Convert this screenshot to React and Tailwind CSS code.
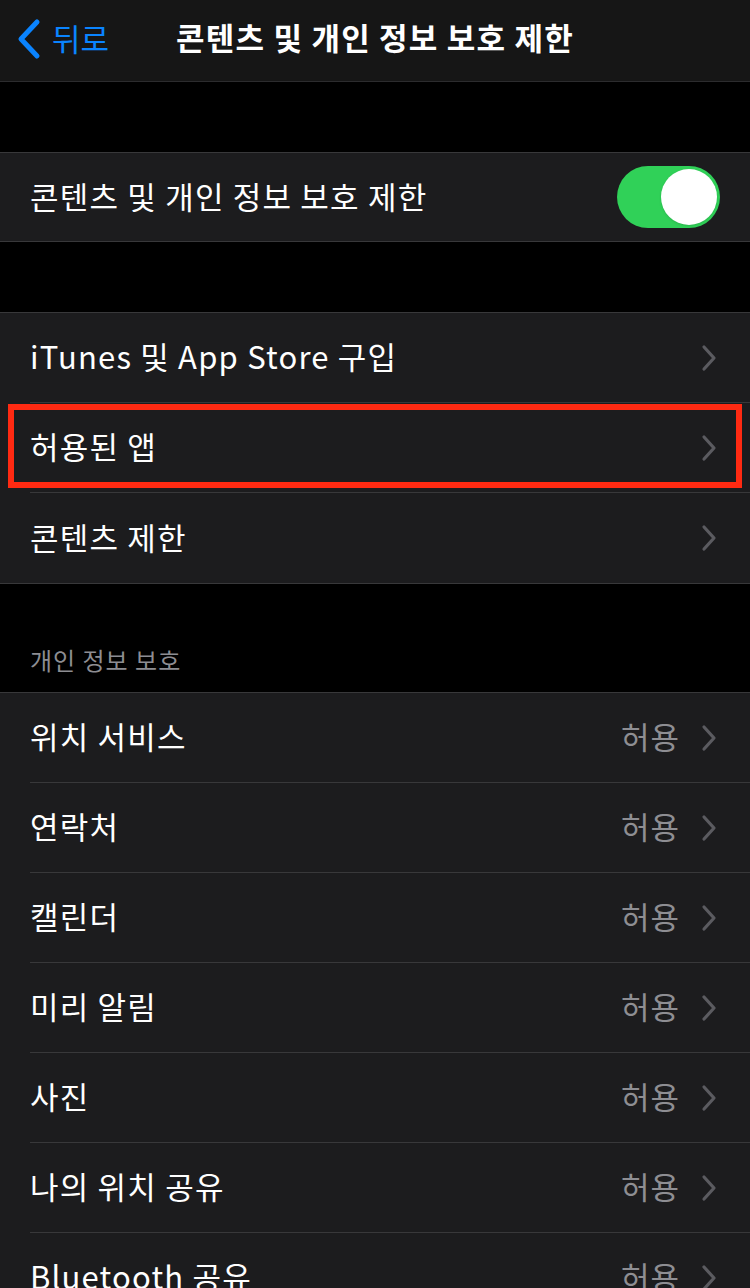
import React from "react";

const FONT = { fontFamily: '"Noto Sans CJK KR", "Noto Sans", sans-serif' };

function Chevron() {
  return (
    <svg width="18" height="28" viewBox="0 0 18 28" className="shrink-0">
      <path d="M4 3 L14 14 L4 25" fill="none" stroke="#5b5b60" strokeWidth="3.2" strokeLinecap="round" strokeLinejoin="round" />
    </svg>
  );
}

function Row({ label, value, last, highlight }) {
  return (
    <div className="relative h-[90px] flex items-center pl-[30px]">
      <div className={`flex-1 h-full flex items-center pr-[32px] ${last ? "" : "border-b border-[#38383a]"}`}>
        <span className="flex-1 text-[31px] tracking-[1.2px] text-white leading-none pb-[4px]">{label}</span>
        {value && <span className="text-[31px] tracking-[1px] text-[#8e8e93] mr-[20px] leading-none pb-[4px]">{value}</span>}
        <Chevron />
      </div>
      {highlight && (
        <div className="absolute left-[8px] right-[8px] top-[1px] bottom-[5px] border-[6px] border-[#ff2a12]" />
      )}
    </div>
  );
}

const privacyRows = ["위치 서비스", "연락처", "캘린더", "미리 알림", "사진", "나의 위치 공유", "Bluetooth 공유"];

export default function App() {
  return (
    <div className="w-[750px] h-[1288px] overflow-hidden bg-black" style={FONT}>
      {/* Nav bar */}
      <div className="relative h-[82px] bg-[#161616] border-b border-[#2c2c2e] flex items-center justify-center">
        <div className="absolute left-[16px] top-0 h-full flex items-center pb-[4px]">
          <svg width="26" height="44" viewBox="0 0 26 44">
            <path d="M21 5 L5 22 L21 39" fill="none" stroke="#0a84ff" strokeWidth="5" strokeLinecap="round" strokeLinejoin="round" />
          </svg>
          <span className="ml-[10px] text-[31px] text-[#0a84ff]">뒤로</span>
        </div>
        <span className="text-[31px] tracking-[1.2px] font-semibold text-white pb-[6px]">콘텐츠 및 개인 정보 보호 제한</span>
      </div>

      <div className="h-[70px]" />

      {/* Toggle */}
      <div className="h-[90px] bg-[#1c1c1e] border-y border-[#38383a] flex items-center pl-[30px] pr-[30px]">
        <span className="flex-1 text-[31px] tracking-[1.2px] text-white leading-none pb-[4px]">콘텐츠 및 개인 정보 보호 제한</span>
        <div className="w-[103px] h-[62px] rounded-full bg-[#30d158] flex items-center justify-end pr-[3px]">
          <div className="w-[56px] h-[56px] rounded-full bg-white shadow" />
        </div>
      </div>

      <div className="h-[70px]" />

      <div className="bg-[#1c1c1e] border-y border-[#38383a]">
        <Row label="iTunes 및 App Store 구입" />
        <Row label="허용된 앱" highlight />
        <Row label="콘텐츠 제한" last />
      </div>

      <div className="h-[108px] flex items-end pl-[30px] pb-[14px]">
        <span className="text-[24px] tracking-[1px] text-[#8d8d92]">개인 정보 보호</span>
      </div>

      <div className="bg-[#1c1c1e] border-t border-[#38383a]">
        {privacyRows.map((r) => (
          <Row key={r} label={r} value="허용" />
        ))}
      </div>
    </div>
  );
}
